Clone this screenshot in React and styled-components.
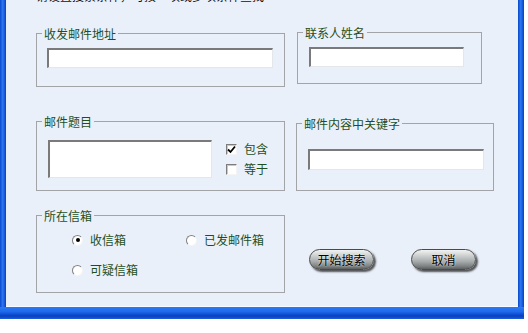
import { createGlobalStyle, styled } from "styled-components";

const GlobalStyle = createGlobalStyle`
  html, body {
    margin: 0;
    padding: 0;
    background: #ffffff;
  }
  body {
    font-family: "Noto Sans CJK SC", "Noto Sans", sans-serif;
    font-size: 12px;
  }
`;

const Window = styled.div`
  /* 창 전체 */
  width: 524px;
  display: flex;
  flex-direction: column;
`;

const Frame = styled.div`
  display: flex;
  height: 307px;
`;

const SideEdge = styled.div`
  width: 6px;
  background: linear-gradient(to right, #0a46cc, #2f78f0 45%, #1a5ee0 70%, #0b3fb8);
`;

const BottomEdge = styled.div`
  height: 12px;
  background: linear-gradient(
    to bottom,
    #2c7af4 0%,
    #1d68ec 40%,
    #0c49cf 65%,
    #0a3fb6 75%,
    #1a5fe0 100%
  );
`;

const Content = styled.div`
  flex: 1;
  background: #eaf0fa;
  border-bottom: 1px solid #f8fbff;
  overflow: hidden;
  padding-left: 30px;
  box-sizing: border-box;
`;

const Title = styled.div`
  margin-top: -11px;
  line-height: 14px;
  color: #111;
  white-space: nowrap;
`;

const Row = styled.div`
  display: flex;
  gap: ${(p) => p.$gap || 12}px;
  margin-top: ${(p) => p.$top}px;
  align-items: flex-start;
`;

const Group = styled.div`
  /* 그룹 박스 */
  box-sizing: border-box;
  width: ${(p) => p.$w}px;
  height: ${(p) => p.$h}px;
  margin-top: ${(p) => p.$top || 0}px;
  border: 1px solid #a2a4a8;
  display: flex;
  flex-direction: column;
`;

const Caption = styled.span`
  align-self: flex-start;
  margin: -7px 0 0 5px;
  padding: 0 2px;
  line-height: 14px;
  background: #eaf0fa;
  color: #1e4f1e;
  white-space: nowrap;
`;

const GroupBody = styled.div`
  display: flex;
  align-items: flex-start;
  padding-left: ${(p) => p.$left}px;
  margin-top: ${(p) => p.$top}px;
  gap: ${(p) => p.$gap || 0}px;
`;

const TextBox = styled.input`
  box-sizing: border-box;
  width: ${(p) => p.$w}px;
  height: ${(p) => p.$h}px;
  margin: 0;
  padding: 0 3px;
  background: #ffffff;
  border-top: 2px solid #7a7a7a;
  border-left: 2px solid #7a7a7a;
  border-right: 1px solid #e4e6ea;
  border-bottom: 1px solid #e4e6ea;
  outline: none;
  font: inherit;
`;

const TextArea = styled.textarea`
  box-sizing: border-box;
  width: ${(p) => p.$w}px;
  height: ${(p) => p.$h}px;
  margin: 0;
  padding: 2px 3px;
  resize: none;
  background: #ffffff;
  border-top: 2px solid #7a7a7a;
  border-left: 2px solid #7a7a7a;
  border-right: 1px solid #e4e6ea;
  border-bottom: 1px solid #e4e6ea;
  outline: none;
  font: inherit;
`;

const CheckList = styled.div`
  display: flex;
  flex-direction: column;
  gap: 6px;
  margin-top: 2px;
`;

const OptionLabel = styled.label`
  display: flex;
  align-items: center;
  gap: 7px;
  line-height: 14px;
  height: 14px;
  color: #1e4f1e;
  white-space: nowrap;
`;

const CheckBox = styled.span`
  box-sizing: border-box;
  width: 11px;
  height: 11px;
  background: #ffffff;
  border-top: 1px solid #7d7d7d;
  border-left: 1px solid #7d7d7d;
  border-right: 1px solid #f4f4f4;
  border-bottom: 1px solid #f4f4f4;
  box-shadow: inset 1px 1px 0 #c8c8c8;
  display: flex;
  align-items: center;
  justify-content: center;
`;

const Radio = styled.span`
  box-sizing: border-box;
  width: 11px;
  height: 11px;
  border-radius: 50%;
  background: #ffffff;
  border: 1px solid;
  border-color: #808080 #f4f4f4 #f4f4f4 #808080;
  display: flex;
  align-items: center;
  justify-content: center;

  &::after {
    content: "";
    width: 4px;
    height: 4px;
    border-radius: 50%;
    background: ${(p) => (p.$checked ? "#000" : "transparent")};
  }
`;

const RadioGrid = styled.div`
  display: grid;
  grid-template-columns: 114px auto;
  row-gap: 16px;
  padding-left: 35px;
  margin-top: 10px;
`;

const Buttons = styled.div`
  display: flex;
  gap: 37px;
  margin-top: 34px;
`;

const PillButton = styled.button`
  box-sizing: border-box;
  width: 65px;
  height: 21px;
  padding: 0;
  border-radius: 11px;
  border: 1px solid #4a4a4a;
  background: linear-gradient(
    to bottom,
    #f2f2f2 0%,
    #d4d6d6 25%,
    #a9acac 60%,
    #7f8282 85%,
    #5d6060 100%
  );
  box-shadow: 2px 2px 2px rgba(30, 30, 30, 0.75);
  font-family: "Noto Sans CJK SC", sans-serif;
  font-size: 12px;
  line-height: 18px;
  color: #000;
  text-shadow: 0 0 2px #ffffff;
`;

const CheckMark = () => (
  <svg width="9" height="9" viewBox="0 0 9 9">
    <path d="M1 4.5 L3.5 7 L8 1.5" stroke="#000" strokeWidth="1.8" fill="none" />
  </svg>
);

const Option = ({ kind, checked, children }) => (
  <OptionLabel>
    {kind === "radio" ? (
      <Radio $checked={checked} />
    ) : (
      <CheckBox>{checked && <CheckMark />}</CheckBox>
    )}
    {children}
  </OptionLabel>
);

const App = () => {
  return (
    <>
      <GlobalStyle />
      <Window>
        <Frame>
          <SideEdge />
          <Content>
            <Title>请设置搜索条件，可按一项或多项条件查找</Title>

            <Row $top={29}>
              <Group $w={249} $h={54} $top={1}>
                <Caption>收发邮件地址</Caption>
                <GroupBody $left={10} $top={7}>
                  <TextBox $w={226} $h={20} />
                </GroupBody>
              </Group>
              <Group $w={185} $h={52}>
                <Caption>联系人姓名</Caption>
                <GroupBody $left={11} $top={7}>
                  <TextBox $w={155} $h={20} />
                </GroupBody>
              </Group>
            </Row>

            <Row $top={34} $gap={11}>
              <Group $w={249} $h={70}>
                <Caption>邮件题目</Caption>
                <GroupBody $left={11} $top={11} $gap={14}>
                  <TextArea $w={164} $h={38} />
                  <CheckList>
                    <Option checked>包含</Option>
                    <Option>等于</Option>
                  </CheckList>
                </GroupBody>
              </Group>
              <Group $w={198} $h={68} $top={2}>
                <Caption>邮件内容中关键字</Caption>
                <GroupBody $left={11} $top={18}>
                  <TextBox $w={176} $h={21} />
                </GroupBody>
              </Group>
            </Row>

            <Row $top={24} $gap={24}>
              <Group $w={249} $h={78}>
                <Caption>所在信箱</Caption>
                <RadioGrid>
                  <Option kind="radio" checked>
                    收信箱
                  </Option>
                  <Option kind="radio">已发邮件箱</Option>
                  <Option kind="radio">可疑信箱</Option>
                </RadioGrid>
              </Group>
              <Buttons>
                <PillButton>开始搜索</PillButton>
                <PillButton>取消</PillButton>
              </Buttons>
            </Row>
          </Content>
          <SideEdge />
        </Frame>
        <BottomEdge />
      </Window>
    </>
  );
};

export default App;
